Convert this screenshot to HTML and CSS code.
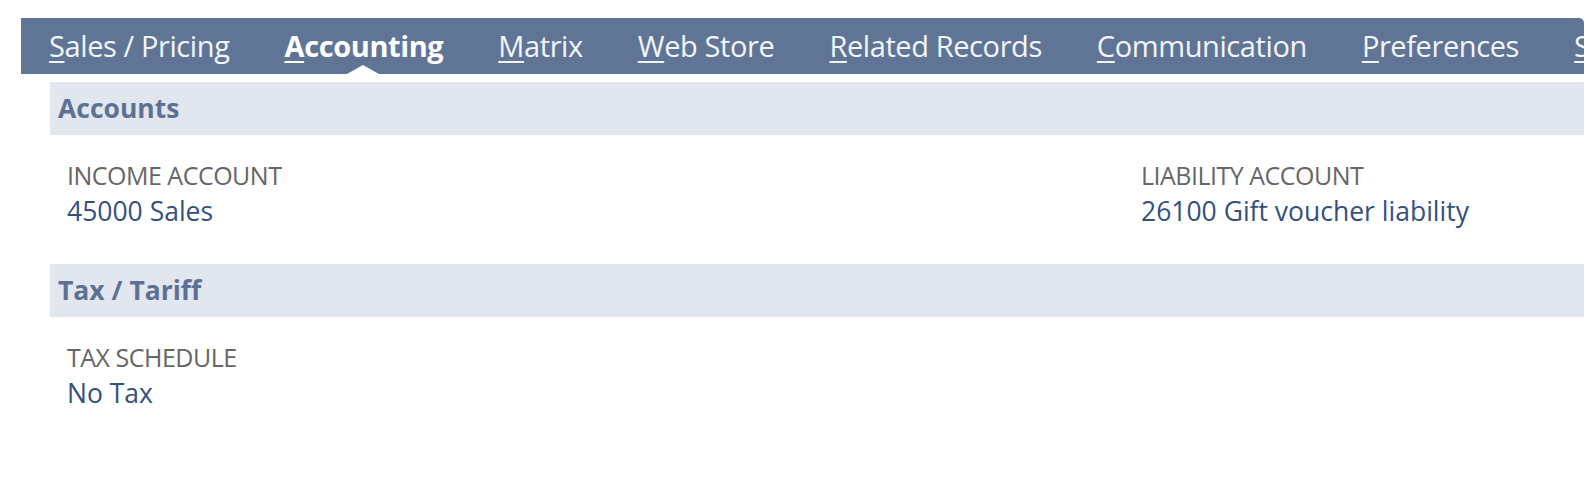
FILE: index.html
```html
<!doctype html>
<html lang="en">
  <head>
    <meta charset="UTF-8" />
    <meta name="viewport" content="width=device-width, initial-scale=1.0" />
    <title>Item - Accounting</title>
    <link rel="stylesheet" href="styles.css">
  </head>
  <body>
    <div class="record">
      <div class="tab-bar">
        <a class="tab"><u>S</u>ales / Pricing</a>
        <a class="tab active"><u>A</u>ccounting</a>
        <a class="tab"><u>M</u>atrix</a>
        <a class="tab"><u>W</u>eb Store</a>
        <a class="tab"><u>R</u>elated Records</a>
        <a class="tab"><u>C</u>ommunication</a>
        <a class="tab"><u>P</u>references</a>
        <a class="tab"><u>S</u>ystem Information</a>
      </div>

      <div class="tab-body">
        <div class="section-head">Accounts</div>
        <div class="field-grid">
          <div class="field">
            <div class="field-label">INCOME ACCOUNT</div>
            <div class="field-value">45000 Sales</div>
          </div>
          <div class="field">
            <div class="field-label">LIABILITY ACCOUNT</div>
            <div class="field-value">26100 Gift voucher liability</div>
          </div>
        </div>

        <div class="section-head">Tax / Tariff</div>
        <div class="field-grid">
          <div class="field">
            <div class="field-label">TAX SCHEDULE</div>
            <div class="field-value">No Tax</div>
          </div>
        </div>
      </div>
    </div>
  </body>
</html>
```

FILE: styles.css
```css
body {
  font-family: "Open Sans", "Liberation Sans", sans-serif;
  background-color: #ffffff;
  margin: 0;
}
.record {
  padding: 18px 2px 0 21px;
}
.tab-bar {
  display: flex;
  height: 56px;
  align-items: center;
  background-color: #607596;
  border-top-right-radius: 5px;
  overflow: hidden;
  white-space: nowrap;
}
.tab {
  position: relative;
  padding: 0 27px 0 28px;
  font-size: 29px;
  color: #f2f5f9;
  line-height: 56px;
  letter-spacing: -0.4px;
}
.tab u {
  text-decoration-thickness: 2px;
  text-underline-offset: 4px;
}
.tab.active {
  font-weight: 700;
  color: #ffffff;
}
/* little pointer under the selected tab */
.tab.active::after {
  content: "";
  position: absolute;
  left: 50%;
  bottom: 0;
  margin-left: -16px;
  border-left: 16px solid transparent;
  border-right: 16px solid transparent;
  border-bottom: 9px solid #ffffff;
}
.tab-body {
  padding: 8px 0 0 29px;
}
.section-head {
  background-color: #e1e6ef;
  height: 53px;
  line-height: 53px;
  padding-left: 8px;
  font-size: 26.5px;
  font-weight: 700;
  color: #5f7192;
}
.field-grid {
  display: grid;
  grid-template-columns: 1074px 1fr;
  padding: 23px 0 34px 17px;
}
.field-label {
  font-size: 25px;
  color: #666666;
  letter-spacing: -0.5px;
  line-height: 34px;
}
.field-value {
  font-size: 26.5px;
  color: #34507f;
  line-height: 38px;
}
```
